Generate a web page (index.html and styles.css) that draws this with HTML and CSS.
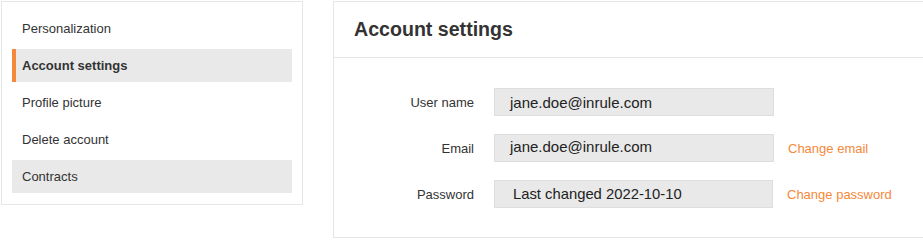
FILE: index.html
```html
<!DOCTYPE html>
<html>
<head>
    <title>Account settings</title>
    <meta name="viewport" content="width=device-width, initial-scale=1.0">
    <link rel="stylesheet" href="styles.css">
</head>
<body>
    <div class="page">
        <!-- Side navigation -->
        <nav class="side-nav">
            <div class="nav-item">Personalization</div>
            <div class="nav-item active">Account settings</div>
            <div class="nav-item">Profile picture</div>
            <div class="nav-item">Delete account</div>
            <div class="nav-item shaded">Contracts</div>
        </nav>

        <!-- Main settings panel -->
        <section class="settings-panel">
            <div class="panel-header">
                <h1>Account settings</h1>
            </div>
            <div class="panel-body">
                <div class="field-row">
                    <label class="field-label">User name</label>
                    <div class="field-value">jane.doe@inrule.com</div>
                </div>
                <div class="field-row">
                    <label class="field-label">Email</label>
                    <div class="field-value raised">jane.doe@inrule.com</div>
                    <a class="field-link" href="#">Change email</a>
                </div>
                <div class="field-row">
                    <label class="field-label">Password</label>
                    <div class="field-value password">Last changed 2022-10-10</div>
                    <a class="field-link" href="#">Change password</a>
                </div>
            </div>
        </section>
    </div>
</body>
</html>
```

FILE: styles.css
```css
:root {
    --border: #e6e6e6;
    --row-bg: #e9e9e9;
    --accent: #f5883a;
    --text: #333;
}

html, body {
    margin: 0;
    padding: 0;
    background: #fff;
}

body {
    font-family: "Liberation Sans", Arial, sans-serif;
    color: var(--text);
}

.page {
    display: flex;
    align-items: flex-start;
    gap: 30px;
    padding: 1px 0 0 1px;
}

/* Side navigation */
.side-nav {
    width: 280px;
    border: 1px solid var(--border);
    padding: 10px 10px 11px;
    display: flex;
    flex-direction: column;
    gap: 4px;
}

.nav-item {
    height: 33px;
    line-height: 33px;
    padding-left: 10px;
    font-size: 13px;
    color: var(--text);
}

.nav-item.active {
    background: var(--row-bg);
    border-left: 4px solid var(--accent);
    padding-left: 6px;
    font-weight: bold;
}

.nav-item.shaded {
    background: var(--row-bg);
}

.settings-panel {
    flex: 1;
    border: 1px solid var(--border);
    border-right: none;
}

.panel-header {
    height: 55px;
    border-bottom: 1px solid var(--border);
    display: flex;
    align-items: center;
    padding-left: 20px;
}

.panel-header h1 {
    margin: 0;
    font-size: 19.6px;
    font-weight: bold;
    color: #333;
}

.panel-body {
    padding: 30px 0 29px;
    display: flex;
    flex-direction: column;
    gap: 18px;
}

.field-row {
    display: flex;
    align-items: center;
    height: 28px;
}

.field-label {
    width: 140px;
    margin-right: 20px;
    text-align: right;
    font-size: 13px;
    color: var(--text);
}

.field-value {
    width: 263px;
    height: 26px;
    line-height: 27px;
    padding-left: 15px;
    background: var(--row-bg);
    border: 1px solid #dedede;
    font-size: 15px;
    color: #222;
}

.field-value.raised {
    line-height: 23px;
}

.field-value.password {
    width: 259px;
    padding-left: 18px;
    line-height: 26px;
    font-size: 14.8px;
}

.field-link {
    margin-left: 14px;
    font-size: 13px;
    color: var(--accent);
    text-decoration: none;
}
```
